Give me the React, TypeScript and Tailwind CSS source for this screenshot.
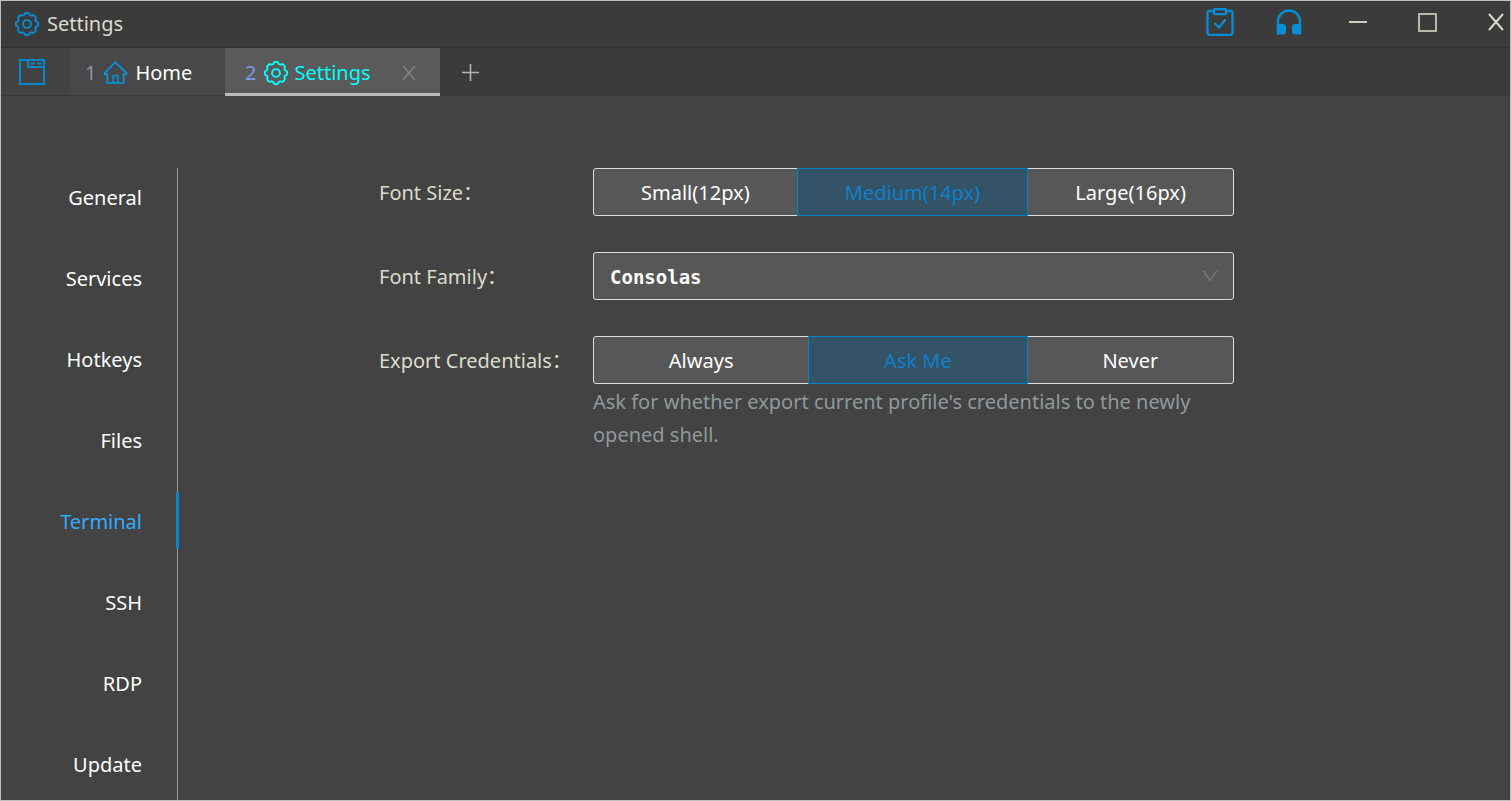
import { useState } from "react";
import clsx from "clsx";
import { AiOutlineDown, AiOutlineHome } from "react-icons/ai";

const menuItems = [
  "General",
  "Services",
  "Hotkeys",
  "Files",
  "Terminal",
  "SSH",
  "RDP",
  "Update",
];

// outline of a wheel with eight soft lobes
const gearPoints = Array.from({ length: 96 }, (_, i) => {
  const angle = (i / 96) * Math.PI * 2;
  const wave = Math.tanh(2.2 * Math.cos(angle * 8) + 0.6);
  const r = 10.2 + wave * 0.9;
  return `${(12 + r * Math.cos(angle)).toFixed(2)},${(12 + r * Math.sin(angle)).toFixed(2)}`;
}).join(" ");

const GearIcon = () => (
  <svg
    className="size-6 shrink-0"
    viewBox="0 0 24 24"
    fill="none"
    stroke="currentColor"
    strokeWidth="1.900"
    strokeLinejoin="round"
  >
    <polygon points={gearPoints} />
    <circle cx="12" cy="12" r="3.900" />
  </svg>
);

const PanelIcon = () => (
  <svg
    className="size-[26px]"
    viewBox="0 0 26 26"
    fill="none"
    stroke="currentColor"
    strokeWidth="2"
  >
    <path d="M1 1h24v24H1z" />
    <path d="M9 1v7h16" />
    <path d="M11.500 4.500h4.500M18 4.500h4.500" />
  </svg>
);

const TaskIcon = () => (
  <svg
    className="h-7 w-7"
    viewBox="0 0 28 28"
    fill="none"
    stroke="currentColor"
    strokeWidth="2.300"
  >
    <path d="M7.500 3H3.500a2 2 0 0 0-2 2v20a2 2 0 0 0 2 2h21a2 2 0 0 0 2-2V5a2 2 0 0 0-2-2h-4" />
    <rect x="8" y="1.200" width="12" height="5" rx="1" />
    <path d="m8.500 15 4.500 4.500 6.500-8" />
  </svg>
);

const HeadphoneIcon = () => (
  <svg className="h-[26px] w-[26px]" viewBox="0 0 26 26" fill="none">
    <path
      d="M2 17v-4.500a11 11 0 0 1 22 0V17"
      stroke="currentColor"
      strokeWidth="2.400"
    />
    <path
      d="M.8 15H7a3 3 0 0 1 3 3v4.500a3 3 0 0 1-3 3H.8zM25.200 15H19a3 3 0 0 0-3 3v4.500a3 3 0 0 0 3 3h6.200z"
      fill="currentColor"
    />
  </svg>
);

const TitleBar = () => (
  <header className="flex h-[47px] shrink-0 items-center border-b border-[#333333] bg-[#3b3b3b] pl-3.5 text-[#dcdccc]">
    <span className="text-[#068fd6]">
      <GearIcon />
    </span>
    <h1 className="ml-2 flex-1">Settings</h1>
    <div className="flex items-center gap-[41px] pb-1">
      <button
        type="button"
        aria-label="Tasks"
        className="flex w-7 justify-center text-[#068fd6]"
      >
        <TaskIcon />
      </button>
      <button
        type="button"
        aria-label="Support"
        className="flex w-7 justify-center text-[#068fd6]"
      >
        <HeadphoneIcon />
      </button>
      <button
        type="button"
        aria-label="Minimize"
        className="flex w-7 justify-center"
      >
        <span className="h-0.5 w-[18px] bg-[#ccccbc]" />
      </button>
      <button
        type="button"
        aria-label="Maximize"
        className="flex w-7 justify-center"
      >
        <span className="size-[19px] border-2 border-[#b8b8a8]" />
      </button>
      <button
        type="button"
        aria-label="Close window"
        className="flex w-7 justify-center"
      >
        <svg
          className="h-[18px] w-4"
          viewBox="0 0 16 18"
          stroke="currentColor"
          strokeWidth="1.900"
        >
          <path d="M1 1l14 16M15 1L1 17" />
        </svg>
      </button>
    </div>
  </header>
);

const TabBar = () => (
  <nav
    aria-label="Tabs"
    className="flex h-12 shrink-0 items-stretch border-b border-[#393939] bg-[#3b3b3b]"
  >
    <button
      type="button"
      aria-label="Panels"
      className="flex w-17 items-center bg-[#424242] pl-[18px] text-[#0787ca]"
    >
      <PanelIcon />
    </button>
    <a
      href="#home"
      className="flex w-39 items-center gap-1.5 bg-[#484848] pt-0.5 pl-4"
    >
      <span className="text-[#8c93a8]">1</span>
      <AiOutlineHome className="size-[27px] text-[#0a8fd6]" />
      Home
    </a>
    <div className="-mb-px flex w-[215px] items-center border-b-3 border-[#bbbbbb] bg-[#5a5a5a] pt-1 pl-5">
      <a
        href="#settings"
        aria-current="page"
        className="flex flex-1 items-center gap-1.5 text-[#00ffff]"
      >
        <span className="mr-0.5 text-[#7c9aec]">2</span>
        <GearIcon />
        Settings
      </a>
      <button
        type="button"
        aria-label="Close tab"
        className="mr-6 text-[#808080]"
      >
        <svg
          className="size-[14px]"
          viewBox="0 0 14 14"
          stroke="currentColor"
          strokeWidth="1.600"
        >
          <path d="M1 0l12 14M13 0L1 14" />
        </svg>
      </button>
    </div>
    <button
      type="button"
      aria-label="New tab"
      className="ml-[22px] pt-0.5 text-[#b4b4b4]"
    >
      <svg
        className="size-[17px]"
        viewBox="0 0 17 17"
        stroke="currentColor"
        strokeWidth="1.600"
      >
        <path d="M8.500 0v17M0 8.500h17" />
      </svg>
    </button>
  </nav>
);

const SideMenu = () => (
  <nav
    aria-label="Settings sections"
    className="flex w-[177px] shrink-0 flex-col gap-6 border-r border-[#999999]"
  >
    {menuItems.map((item) => (
      <a
        key={item}
        href={`#${item.toLowerCase()}`}
        className={clsx(
          "-mr-0.5 flex h-[57px] shrink-0 items-center justify-end border-r-3 pt-0.5 pr-[34px]",
          item === "Terminal"
            ? "border-[#0785cb] text-[#33aaff]"
            : "border-transparent text-white",
        )}
      >
        {item}
      </a>
    ))}
  </nav>
);

type RadioGroupProps = {
  name: string;
  label: string;
  options: string[];
  initial: string;
};

const RadioGroup = ({ name, label, options, initial }: RadioGroupProps) => {
  const [value, setValue] = useState(initial);

  return (
    <div role="radiogroup" aria-label={label} className="flex h-12">
      {options.map((option) => (
        <label
          key={option}
          className={clsx(
            "relative -ml-px flex flex-auto cursor-pointer items-center justify-center border pt-0.5 first:ml-0 first:rounded-l-[3px] last:rounded-r-[3px]",
            option === value
              ? "z-10 border-[#0785cb] bg-[#345366] text-[#0f7fc6]"
              : "border-[#dddddd] bg-[#575757] text-white",
          )}
        >
          <input
            type="radio"
            name={name}
            value={option}
            checked={option === value}
            onChange={() => setValue(option)}
            className="sr-only"
          />
          {option}
        </label>
      ))}
    </div>
  );
};

const TerminalForm = () => (
  <form className="grid flex-1 grid-cols-[214px_minmax(0,641px)] content-start gap-y-9 pl-[201px] text-[#dcdccc]">
    <span className="flex h-12 items-center pt-0.5">Font Size：</span>
    <RadioGroup
      name="fontSize"
      label="Font Size"
      options={["Small(12px)", "Medium(14px)", "Large(16px)"]}
      initial="Medium(14px)"
    />
    <label htmlFor="fontFamily" className="flex h-12 items-center pt-0.5">
      Font Family：
    </label>
    <div className="relative">
      <select
        id="fontFamily"
        className="h-12 w-full appearance-none rounded-[3px] border border-[#dddddd] bg-[#575757] px-4 pt-0.5 font-['DejaVu_Sans_Mono',monospace] text-[19px] font-bold text-white"
      >
        <option>Consolas</option>
      </select>
      <AiOutlineDown className="pointer-events-none absolute top-3.5 right-3.5 size-5 text-[#777777]" />
    </div>
    <span className="flex h-12 items-center pt-0.5">Export Credentials：</span>
    <div>
      <RadioGroup
        name="exportCredentials"
        label="Export Credentials"
        options={["Always", "Ask Me", "Never"]}
        initial="Ask Me"
      />
      <p className="pt-px leading-[33px] text-[#8f999d]">
        Ask for whether export current profile's credentials to the newly opened
        shell.
      </p>
    </div>
  </form>
);

const App = () => (
  <div className="flex h-screen flex-col overflow-hidden border border-[#bcbfbd] bg-[#434343] font-['Noto_Sans','Noto_Sans_CJK_SC',sans-serif] text-[20px] leading-7 text-white">
    <TitleBar />
    <TabBar />
    <main className="flex min-h-0 flex-1 overflow-hidden pt-18">
      <SideMenu />
      <TerminalForm />
    </main>
  </div>
);

export default App;
